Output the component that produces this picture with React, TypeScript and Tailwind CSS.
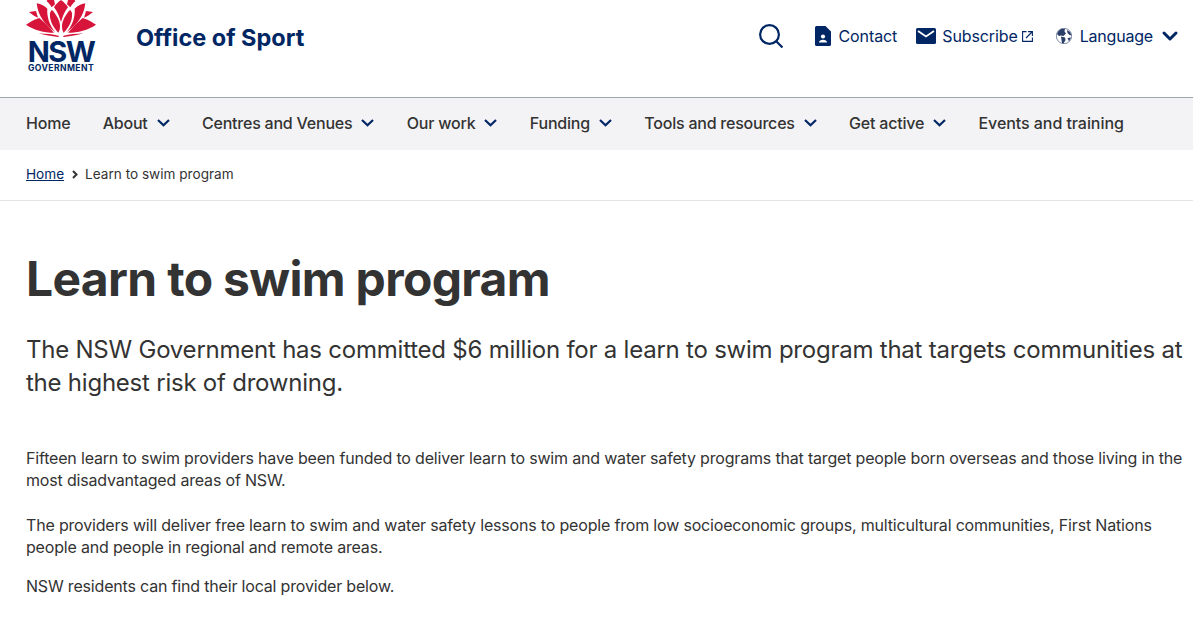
import { ChevronDown } from "lucide-react";

const navItems = [
  { label: "Home", cls: "" },
  { label: "About", menu: true, cls: "" },
  { label: "Centres and Venues", menu: true, cls: "" },
  { label: "Our work", menu: true, cls: "" },
  { label: "Funding", menu: true, cls: "" },
  { label: "Tools and resources", menu: true, cls: "" },
  { label: "Get active", menu: true, cls: "" },
  { label: "Events and training", cls: "tracking-[-0.06px]" },
];

// drawn from the logo crop, 3 units per pixel
function Waratah() {
  return (
    <svg viewBox="0 0 210 111" className="h-[37px] w-[70px] fill-[#d7153a]">
      <path d="M105 0 C113 6 122 14 126 22 C116 34 109 52 105 66 C101 52 94 34 84 22 C88 14 97 6 105 0Z" />
      <path d="M64 0 H84 L87 13 L77 22 C72 14 67 8 62 4Z" />
      <path d="M146 0 H126 L123 13 L133 22 C138 14 143 8 148 4Z" />
      <path d="M78 30 C90 42 102 62 102 78 C102 88 100 94 97 98 C82 84 70 62 72 40 C73 36 75 32 78 30Z" />
      <path d="M132 30 C120 42 108 62 108 78 C108 88 110 94 113 98 C128 84 140 62 138 40 C137 36 135 32 132 30Z" />
      <path d="M32 10 C46 12 56 18 64 26 C62 48 70 76 88 96 C60 78 36 50 32 10Z" />
      <path d="M178 10 C164 12 154 18 146 26 C148 48 140 76 122 96 C150 78 174 50 178 10Z" />
      <path d="M9 36 L30 33 L36 53 C28 50 18 44 9 36Z" />
      <path d="M201 36 L180 33 L174 53 C182 50 192 44 201 36Z" />
      <path d="M0 74 C12 66 26 58 40 54 C56 68 72 84 84 98 C54 98 24 90 0 74Z" />
      <path d="M210 74 C198 66 184 58 170 54 C154 68 138 84 126 98 C156 98 186 90 210 74Z" />
      <path d="M38 100 C58 102 80 102 100 108 L96 111 C76 108 56 106 38 100Z" />
      <path d="M172 100 C152 102 130 102 110 108 L114 111 C134 108 154 106 172 100Z" />
    </svg>
  );
}

function NavChevron() {
  return (
    <svg viewBox="0 0 13 8" fill="none" stroke="#002664" strokeWidth={2.2} className="h-[8px] w-[13px]">
      <path d="M1 1 L6.500 6.300 L12 1" />
    </svg>
  );
}

function App() {
  return (
    <div className="h-[632px] overflow-hidden bg-white font-['Inter','Liberation_Sans',sans-serif] text-[#333]">
      <header className="flex h-[97px] items-start justify-between pl-[26px] pr-[14px]">
        <div className="flex items-start">
          <div className="flex w-[70px] flex-col items-center">
            <Waratah />
            <div className="mt-[2.5px] text-[29px] font-bold leading-[24px] tracking-[-1.6px] text-[#002664]">NSW</div>
            <div className="mt-[0.5px] text-[8.6px] font-bold leading-[9px] tracking-[0.4px] text-[#002664]">GOVERNMENT</div>
          </div>
          <div className="ml-[40px] mt-[23px] text-[23.5px] font-bold leading-[30px] text-[#002664]">Office of Sport</div>
        </div>
        <div className="mt-[24px] flex items-center text-[16px] text-[#002664]">
          <svg viewBox="0 0 24 24" fill="none" stroke="#002664" strokeWidth={2.2} className="h-[24px] w-[24px]">
            <circle cx="10.500" cy="10.500" r="9.400" />
            <path d="M17 17 L23.500 23.500" />
          </svg>
          <svg viewBox="0 0 16 20" className="ml-[32px] h-[20px] w-[16px] fill-[#002664]">
            <path d="M1.500 0H10.500L16 5.500V18.500a1.500 1.500 0 0 1-1.500 1.500H1.500A1.500 1.500 0 0 1 0 18.500V1.500A1.500 1.500 0 0 1 1.500 0Z" />
            <circle cx="8" cy="10.500" r="2.100" fill="#fff" />
            <path d="M4 16.500c0-1.800 1.800-2.700 4-2.700s4 .9 4 2.700Z" fill="#fff" />
          </svg>
          <span className="ml-[8px] tracking-[-0.1px]">Contact</span>
          <svg viewBox="0 0 20 16" className="ml-[19px] h-[16px] w-[20px]">
            <rect width="20" height="16" rx="1.500" fill="#002664" />
            <path d="M2 3 L10 8.500 L18 3" fill="none" stroke="#fff" strokeWidth={1.800} />
          </svg>
          <span className="ml-[6px] tracking-[-0.1px]">Subscribe</span>
          <svg viewBox="0 0 11 11" fill="none" stroke="#002664" strokeWidth={1.100} className="ml-[4px] mt-[1px] h-[11px] w-[11px]">
            <path d="M4.500 .6H.6V10.400H10.400V6.500" />
            <path d="M4 7 L10 1 M6 .6H10.400V5" />
          </svg>
          <svg viewBox="0 0 16 16" className="ml-[23px] h-[16px] w-[16px]">
            <circle cx="8" cy="8" r="7.700" fill="#fff" stroke="#2b3f6b" strokeWidth={0.600} />
            <path d="M5 1 L9 .8 L8.500 3.500 L10 5.500 L7.500 8 L5 7.500 L3 8 L1 6 L2.500 3Z" fill="#2b3f6b" />
            <path d="M5 8.500 L9 9.500 L9.500 12 L7.500 15.500 L6 15 L5.500 12Z" fill="#2b3f6b" />
            <path d="M11 2 L14 4 L15.500 7.500 L13.500 7 L11.500 5Z" fill="#2b3f6b" />
            <path d="M11.500 10 L15 9.500 L13 13.500Z" fill="#2b3f6b" />
          </svg>
          <span className="ml-[8px] tracking-[-0.2px]">Language</span>
          <ChevronDown size={24} strokeWidth={3} className="ml-[5px] -mr-[3px]" />
        </div>
      </header>
      <nav className="flex h-[53px] items-center gap-[32.4px] border-t border-[#a0a5ae] bg-[#f3f3f6] pb-[2px] pl-[26px] text-[16px] font-medium tracking-[-0.22px]">
        {navItems.map((item) => (
          <div key={item.label} className="flex items-center gap-[9px]">
            <span className={item.cls}>{item.label}</span>
            {item.menu && <NavChevron />}
          </div>
        ))}
      </nav>
      <div className="flex h-[51px] items-center gap-[7.5px] border-b border-[#e4e4e6] pb-[2px] pl-[26px] text-[13.6px]">
        <a className="text-[#002664] underline">Home</a>
        <svg viewBox="0 0 6 9" fill="none" stroke="#333" strokeWidth={2} className="mt-[1px] h-[9px] w-[6px]">
          <path d="M1 1 L4.500 4.500 L1 8" />
        </svg>
        <span>Learn to swim program</span>
      </div>
      <main className="pl-[26px] pr-[4px]">
        <h1 className="mt-[50px] text-[48px] font-bold leading-[56px] tracking-[-0.67px]">Learn to swim program</h1>
        <p className="mt-[26px] text-[24px] leading-[33px] tracking-[-0.23px]">
          The NSW Government has committed $6 million for a learn to swim program that targets communities at the highest risk of drowning.
        </p>
        <p className="mt-[48px] text-[16px] leading-[22px] tracking-[-0.18px]">
          Fifteen learn to swim providers have been funded to deliver learn to swim and water safety programs that target people born overseas and those living in the most disadvantaged areas of NSW.
        </p>
        <p className="mt-[23px] text-[16px] leading-[22px] tracking-[-0.18px]">
          The providers will deliver free learn to swim and water safety lessons to people from low socioeconomic groups, multicultural communities, First Nations people and people in regional and remote areas.
        </p>
        <p className="mt-[17px] text-[16px] leading-[22px] tracking-[-0.18px]">NSW residents can find their local provider below.</p>
      </main>
    </div>
  );
}

export default App;
